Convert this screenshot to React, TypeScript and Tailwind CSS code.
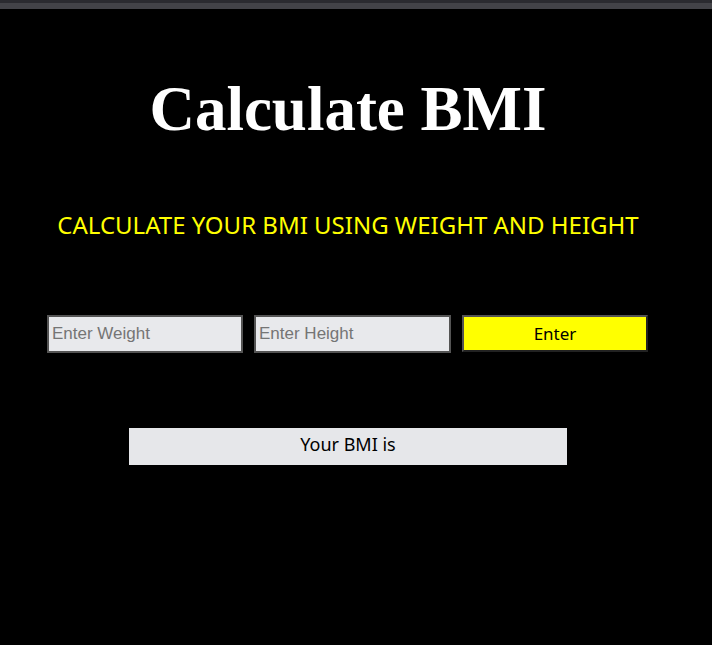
import { useState } from "react"

export default function App() {
  const [weight, setWeight] = useState("")
  const [height, setHeight] = useState("")
  const [bmi, setBmi] = useState<string | null>(null)

  const calc = () => {
    const w = parseFloat(weight)
    const h = parseFloat(height)
    if (w > 0 && h > 0) {
      const m = h > 3 ? h / 100 : h
      setBmi((w / (m * m)).toFixed(2))
    }
  }

  return (
    <div className="min-h-[645px] w-[712px] bg-black flex flex-col">
      {/* window chrome strip */}
      <div className="h-[3px] bg-[#2b2b30]" />
      <div className="h-[6px] bg-[#434348]" />

      <main className="w-[696px] flex flex-col">
        <h1 className="mt-[60px] text-center text-white font-bold text-[63px] leading-[80px] font-['Liberation_Serif',serif]">
          Calculate BMI
        </h1>

        <p className="mt-[60px] text-center text-[#ffff00] text-[24px] leading-[32px] font-['Noto_Sans',sans-serif]">
          CALCULATE YOUR BMI USING WEIGHT AND HEIGHT
        </p>

        <div className="mt-[74px] ml-[47px] flex gap-[11px]">
          <input
            value={weight}
            onChange={e => setWeight(e.target.value)}
            placeholder="Enter Weight"
            className="w-[196px] h-[38px] bg-[#e8e9ec] border-2 border-[#545454] px-[3px] text-[17px] text-black placeholder:text-[#757575] font-['Liberation_Sans',sans-serif] outline-none"
          />
          <input
            value={height}
            onChange={e => setHeight(e.target.value)}
            placeholder="Enter Height"
            className="w-[197px] h-[38px] bg-[#e8e9ec] border-2 border-[#545454] px-[3px] text-[17px] text-black placeholder:text-[#757575] font-['Liberation_Sans',sans-serif] outline-none"
          />
          <button
            onClick={calc}
            className="w-[186px] h-[37px] bg-[#ffff00] border-2 border-t-[#555555] border-l-[#555555] border-r-[#222222] border-b-[#222222] text-[17px] text-black font-['Noto_Sans',sans-serif]"
          >
            Enter
          </button>
        </div>

        <div className="mt-[75px] mx-auto w-[438px] h-[37px] pb-[5px] bg-[#e6e7ea] flex items-center justify-center text-[18px] text-black font-['Noto_Sans',sans-serif]">
          Your BMI is{bmi ? ` ${bmi}` : ""}
        </div>
      </main>
    </div>
  )
}
